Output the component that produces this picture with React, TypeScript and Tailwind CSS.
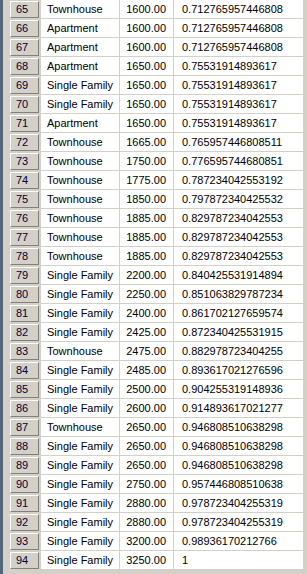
const ROWS: [number, string, string, string][] = [
  [65, 'Townhouse', '1600.00', '0.712765957446808'],
  [66, 'Apartment', '1600.00', '0.712765957446808'],
  [67, 'Apartment', '1600.00', '0.712765957446808'],
  [68, 'Apartment', '1650.00', '0.75531914893617'],
  [69, 'Single Family', '1650.00', '0.75531914893617'],
  [70, 'Single Family', '1650.00', '0.75531914893617'],
  [71, 'Apartment', '1650.00', '0.75531914893617'],
  [72, 'Townhouse', '1665.00', '0.765957446808511'],
  [73, 'Townhouse', '1750.00', '0.776595744680851'],
  [74, 'Townhouse', '1775.00', '0.787234042553192'],
  [75, 'Townhouse', '1850.00', '0.797872340425532'],
  [76, 'Townhouse', '1885.00', '0.829787234042553'],
  [77, 'Townhouse', '1885.00', '0.829787234042553'],
  [78, 'Townhouse', '1885.00', '0.829787234042553'],
  [79, 'Single Family', '2200.00', '0.840425531914894'],
  [80, 'Single Family', '2250.00', '0.851063829787234'],
  [81, 'Single Family', '2400.00', '0.861702127659574'],
  [82, 'Single Family', '2425.00', '0.872340425531915'],
  [83, 'Townhouse', '2475.00', '0.882978723404255'],
  [84, 'Single Family', '2485.00', '0.893617021276596'],
  [85, 'Single Family', '2500.00', '0.904255319148936'],
  [86, 'Single Family', '2600.00', '0.914893617021277'],
  [87, 'Townhouse', '2650.00', '0.946808510638298'],
  [88, 'Single Family', '2650.00', '0.946808510638298'],
  [89, 'Single Family', '2650.00', '0.946808510638298'],
  [90, 'Single Family', '2750.00', '0.957446808510638'],
  [91, 'Single Family', '2880.00', '0.978723404255319'],
  [92, 'Single Family', '2880.00', '0.978723404255319'],
  [93, 'Single Family', '3200.00', '0.98936170212766'],
  [94, 'Single Family', '3250.00', '1'],
];

export default function App() {
  return (
    <div className="flex w-[307px] h-[574px] overflow-hidden bg-[#d4d0c8] font-['Liberation_Sans',Arial,sans-serif] text-[11px] leading-none text-black">
      {/* dark frame edge */}
      <div className="w-[3px] shrink-0 bg-[#56657a]" />
      <div className="flex flex-col w-[304px]">
        {ROWS.map(([n, type, price, pct]) => (
          <Row key={n} n={n} type={type} price={price} pct={pct} />
        ))}
      </div>
    </div>
  );
}

function Row({ n, type, price, pct }: { n: number; type: string; price: string; pct: string }) {
  return (
    <div className="flex h-[19px] shrink-0">
      {/* row header */}
      <div className="w-[38px] shrink-0 flex items-start pl-[7px] pt-[1px]">
        <div className="w-[29px] h-[17px] bg-[#d4d0c8] border-t border-l border-white border-r border-b border-r-[#808080] border-b-[#808080] flex items-center pl-[5px] text-[#000033]">
          {n}
        </div>
      </div>
      <div className="flex w-[263px] shrink-0 bg-white border-b border-[#d4d0c8]">
        <div className="w-[79px] shrink-0 flex items-center pl-[6px] border-r border-[#d4d0c8]">
          {type}
        </div>
        <div className="w-[54px] shrink-0 flex items-center justify-end pr-[7px] border-r border-[#d4d0c8]">
          {price}
        </div>
        <div className="w-[130px] shrink-0 flex items-center pl-[8px] border-r border-[#d4d0c8]">
          {pct}
        </div>
      </div>
    </div>
  );
}
